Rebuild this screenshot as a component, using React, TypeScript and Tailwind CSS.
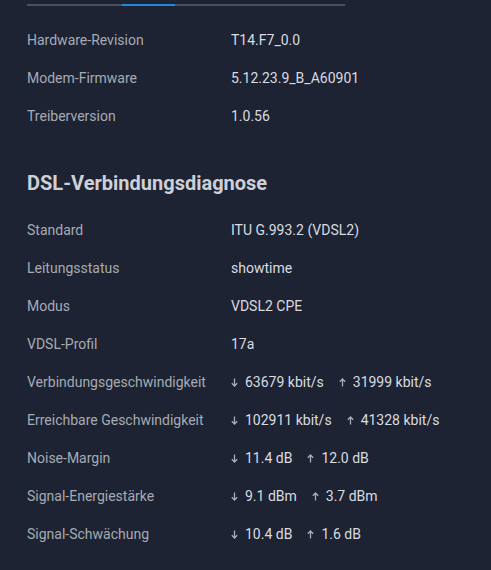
import React from "react";

const Down = () => (
  <svg width="7" height="9" viewBox="0 0 7 9" className="mr-[7px] shrink-0" fill="none" stroke="#a9aeb6" strokeWidth="1.3">
    <path d="M3.5 0.5V8M0.8 5.3L3.5 8L6.2 5.3" />
  </svg>
);
const Up = () => (
  <svg width="7" height="9" viewBox="0 0 7 9" className="mr-[7px] shrink-0" fill="none" stroke="#a9aeb6" strokeWidth="1.3">
    <path d="M3.5 8.5V1M0.8 3.7L3.5 1L6.2 3.7" />
  </svg>
);

type Row = { label: string; value?: string; down?: string; up?: string };

const top: Row[] = [
  { label: "Hardware-Revision", value: "T14.F7_0.0" },
  { label: "Modem-Firmware", value: "5.12.23.9_B_A60901" },
  { label: "Treiberversion", value: "1.0.56" },
];

const dsl: Row[] = [
  { label: "Standard", value: "ITU G.993.2 (VDSL2)" },
  { label: "Leitungsstatus", value: "showtime" },
  { label: "Modus", value: "VDSL2 CPE" },
  { label: "VDSL-Profil", value: "17a" },
  { label: "Verbindungsgeschwindigkeit", down: "63679 kbit/s", up: "31999 kbit/s" },
  { label: "Erreichbare Geschwindigkeit", down: "102911 kbit/s", up: "41328 kbit/s" },
  { label: "Noise-Margin", down: "11.4 dB", up: "12.0 dB" },
  { label: "Signal-Energiestärke", down: "9.1 dBm", up: "3.7 dBm" },
  { label: "Signal-Schwächung", down: "10.4 dB", up: "1.6 dB" },
];

function RowView({ r }: { r: Row }) {
  return (
    <div className="flex items-center h-[38px] text-[14px]">
      <div className="w-[204px] text-[#a6abb3]">{r.label}</div>
      {r.value ? (
        <div className="text-[#d9dce1]">{r.value}</div>
      ) : (
        <div className="flex items-center text-[#d9dce1]">
          <Down />
          <span>{r.down}</span>
          <span className="w-[15px]" />
          <Up />
          <span>{r.up}</span>
        </div>
      )}
    </div>
  );
}

export default function App() {
  return (
    <div
      className="w-[491px] h-[570px] bg-[#1d2332] overflow-hidden"
      style={{ fontFamily: "Roboto, 'Liberation Sans', sans-serif" }}
    >
      <div className="pl-[27px] pt-[4px]">
        <div className="w-[318px] h-[2px] bg-[#4a515e] flex">
          <div className="ml-[95px] w-[53px] h-[2px] bg-[#1f8bd8]" />
        </div>
        <div className="mt-[15px]">
          {top.map((r) => (
            <RowView key={r.label} r={r} />
          ))}
        </div>
        <h2 className="mt-[35px] mb-[15px] h-[26px] leading-[26px] text-[20px] font-bold text-[#cdd0d6]">
          DSL-Verbindungsdiagnose
        </h2>
        <div>
          {dsl.map((r) => (
            <RowView key={r.label} r={r} />
          ))}
        </div>
      </div>
    </div>
  );
}
